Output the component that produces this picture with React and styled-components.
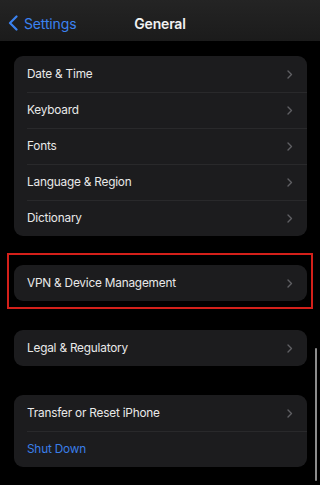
import React from 'react'
import styled, { createGlobalStyle } from 'styled-components'

const GlobalStyle = createGlobalStyle`
    html, body {
        margin: 0;
        padding: 0;
        background: #000;
    }
    body {
        font-family: Inter, "Noto Sans", "Liberation Sans", sans-serif;
        -webkit-font-smoothing: antialiased;
    }
`

const Screen = styled.div`
    position: relative;
    width: 320px;
    height: 485px;
    overflow: hidden;
    background: #000;
`

const NavBar = styled.header`
    height: 41px;
    display: grid;
    grid-template-columns: 1fr auto 1fr;
    align-items: center;
    padding: 5px 8px 0;
    box-sizing: border-box;
    background: linear-gradient(#242424, #1b1b1b);
`

const BackButton = styled.div`
    display: flex;
    align-items: center;
    gap: 6px;
    color: #3b82f0;
    font-size: 14px;
    letter-spacing: -0.15px;
    svg {
        display: block;
    }
`

const Title = styled.h1`
    margin: 0;
    font-size: 14px;
    font-weight: 600;
    letter-spacing: -0.2px;
    color: #f2f2f2;
`

const Content = styled.main`
    display: flex;
    flex-direction: column;
    gap: 29px;
    padding: 15px 13px 0 14px;
`

const Card = styled.section`
    background: #1c1c1e;
    border-radius: 9px;
    overflow: hidden;
`

const Row = styled.div`
    height: 36px;
    display: flex;
    align-items: center;
    justify-content: space-between;
    padding: 0 14px 0 13px;
    font-size: 11.8px;
    letter-spacing: -0.2px;
    color: ${p => (p.$action ? '#3a7ee8' : '#e9e9e9')};
    & + & {
        box-shadow: inset 0 1px 0 #29292b;
        margin-left: 13px;
        padding-left: 0;
    }
`

const Highlight = styled.div`
    position: relative;
    &::before {
        content: '';
        position: absolute;
        top: -12px;
        bottom: -8px;
        left: -7px;
        right: -6px;
        border: 2px solid #d4201a;
        pointer-events: none;
    }
`

const ScrollIndicator = styled.div`
    position: absolute;
    right: 3px;
    top: 348px;
    width: 2.5px;
    height: 133px;
    border-radius: 2px;
    background: #8c8c8c;
`

const Chevron = () => (
    <svg width="6" height="9" viewBox="0 0 6 9" fill="none">
        <path
            d="M1 1l3.5 3.5L1 8"
            stroke="#5f5f63"
            strokeWidth="1.4"
            strokeLinecap="round"
            strokeLinejoin="round"
        />
    </svg>
)

const BackChevron = () => (
    <svg width="10" height="16" viewBox="0 0 10 16" fill="none">
        <path
            d="M8.5 1.5L2 8l6.5 6.5"
            stroke="#3b82f0"
            strokeWidth="2.2"
            strokeLinecap="round"
            strokeLinejoin="round"
        />
    </svg>
)

const Item = ({ label, action }) => (
    <Row $action={action}>
        <span>{label}</span>
        {!action && <Chevron />}
    </Row>
)

const App = () => {
    const first = ['Date & Time', 'Keyboard', 'Fonts', 'Language & Region', 'Dictionary']
    return (
        <Screen>
            <GlobalStyle />
            <NavBar>
                <BackButton>
                    <BackChevron />
                    <span>Settings</span>
                </BackButton>
                <Title>General</Title>
                <div />
            </NavBar>
            <Content>
                <Card>
                    {first.map(l => (
                        <Item key={l} label={l} />
                    ))}
                </Card>
                <Highlight>
                    <Card>
                        <Item label="VPN & Device Management" />
                    </Card>
                </Highlight>
                <Card>
                    <Item label="Legal & Regulatory" />
                </Card>
                <Card>
                    <Item label="Transfer or Reset iPhone" />
                    <Item label="Shut Down" action />
                </Card>
            </Content>
            <ScrollIndicator />
        </Screen>
    )
}

export default App
